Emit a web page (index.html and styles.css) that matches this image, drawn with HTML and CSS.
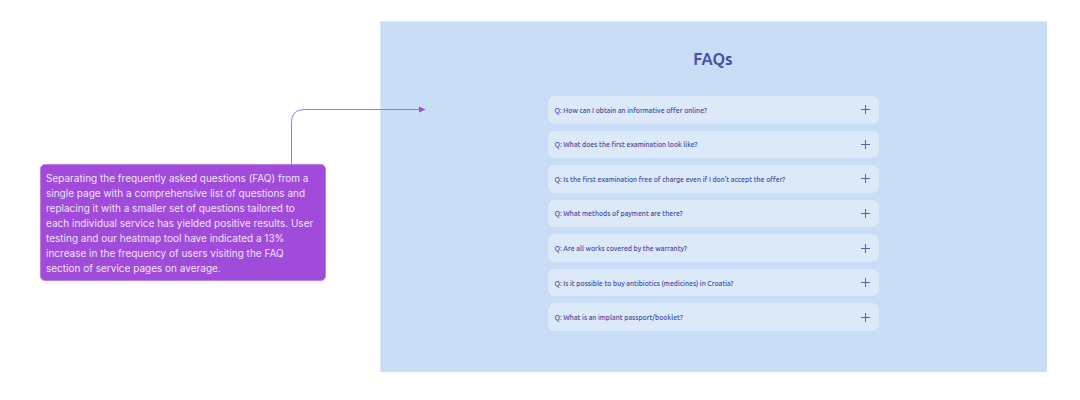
FILE: index.html
```html
<!DOCTYPE html>
<html lang="en">
<head>
  <meta charset="utf-8">
  <meta name="viewport" content="width=device-width, initial-scale=1">
  <title>FAQs</title>
  <link rel="stylesheet" href="styles.css">
</head>
<body>
  <main class="board">
    <aside class="note">
      <svg class="connector" width="136" height="60" viewBox="0 0 136 60" aria-hidden="true">
        <path d="M1.500 60V17.500Q1.500 4.500 14.500 4.500H129" fill="none" stroke="#b06ae4"/>
        <path d="M129 1.500L135.500 4.500L129 7.500Z" fill="#a04bd9"/>
      </svg>
      <p class="note-text">Separating the frequently asked questions (FAQ) from a single page with a comprehensive list of questions and replacing it with a smaller set of questions tailored to each individual service has yielded positive results. User testing and our heatmap tool have indicated a 13% increase in the frequency of users visiting the FAQ section of service pages on average.</p>
    </aside>
    <section class="faq">
      <h1 class="faq-title">FAQs</h1>
      <ul class="faq-list">
        <li class="faq-item"><button class="faq-button" type="button"><span>Q: How can I obtain an informative offer online?</span><svg class="plus" viewBox="0 0 9 9" aria-hidden="true"><path d="M4.500 0V9M0 4.500H9"/></svg></button></li>
        <li class="faq-item"><button class="faq-button" type="button"><span>Q: What does the first examination look like?</span><svg class="plus" viewBox="0 0 9 9" aria-hidden="true"><path d="M4.500 0V9M0 4.500H9"/></svg></button></li>
        <li class="faq-item"><button class="faq-button" type="button"><span>Q: Is the first examination free of charge even if I don't accept the offer?</span><svg class="plus" viewBox="0 0 9 9" aria-hidden="true"><path d="M4.500 0V9M0 4.500H9"/></svg></button></li>
        <li class="faq-item"><button class="faq-button" type="button"><span>Q: What methods of payment are there?</span><svg class="plus" viewBox="0 0 9 9" aria-hidden="true"><path d="M4.500 0V9M0 4.500H9"/></svg></button></li>
        <li class="faq-item"><button class="faq-button" type="button"><span>Q: Are all works covered by the warranty?</span><svg class="plus" viewBox="0 0 9 9" aria-hidden="true"><path d="M4.500 0V9M0 4.500H9"/></svg></button></li>
        <li class="faq-item"><button class="faq-button" type="button"><span>Q: Is it possible to buy antibiotics (medicines) in Croatia?</span><svg class="plus" viewBox="0 0 9 9" aria-hidden="true"><path d="M4.500 0V9M0 4.500H9"/></svg></button></li>
        <li class="faq-item"><button class="faq-button" type="button"><span>Q: What is an implant passport/booklet?</span><svg class="plus" viewBox="0 0 9 9" aria-hidden="true"><path d="M4.500 0V9M0 4.500H9"/></svg></button></li>
      </ul>
    </section>
  </main>
</body>
</html>
```
FILE: styles.css
```css
* {
  box-sizing: border-box;
}

body {
  margin: 0;
  background: #fff;
}

.board {
  display: grid;
  grid-template-columns: 286px minmax(0, 1fr);
  column-gap: 54px;
  align-items: start;
  padding: 21px 33px 28px 40px;
}

.note {
  position: relative;
  margin-top: 143px;
  padding: 6px 5px 4px;
  border: 1px solid #bd7ce9;
  border-radius: 5px;
  background: #a04bd9;
}

.connector {
  position: absolute;
  right: -101px;
  bottom: 100%;
}

.note-text {
  margin: 0;
  color: #f1e2fb;
  font: 400 10px/15px Inter, sans-serif;
}

.faq {
  padding: 24px 18px 41px 16px;
  border-top: 1px solid #d9e9fb;
  border-left: 1px solid #d9e9fb;
  background: #c9def6;
  color: #4a4fa3;
  font-family: Ubuntu, "Noto Sans", sans-serif;
}

.faq-title {
  margin: 0 0 23px;
  font-size: 16px;
  font-weight: 700;
  line-height: 27px;
  text-align: center;
}

.faq-list {
  display: grid;
  grid-auto-rows: 1fr;
  gap: 7px;
  max-width: 331px;
  min-height: 235px;
  margin: 0 auto;
  padding: 0;
  list-style: none;
}

.faq-item {
  display: flex;
}

.faq-button {
  display: flex;
  flex: 1;
  align-items: center;
  justify-content: space-between;
  padding: 0 9px 0 7px;
  border: 0;
  border-radius: 7px;
  background: #dce9f9;
  color: #41469f;
  font: inherit;
  font-size: 7px;
  font-weight: 500;
  line-height: 10px;
  text-align: left;
  cursor: pointer;
}

.plus {
  flex: none;
  width: 9px;
  height: 9px;
  fill: none;
  stroke: #5960b0;
}
```
